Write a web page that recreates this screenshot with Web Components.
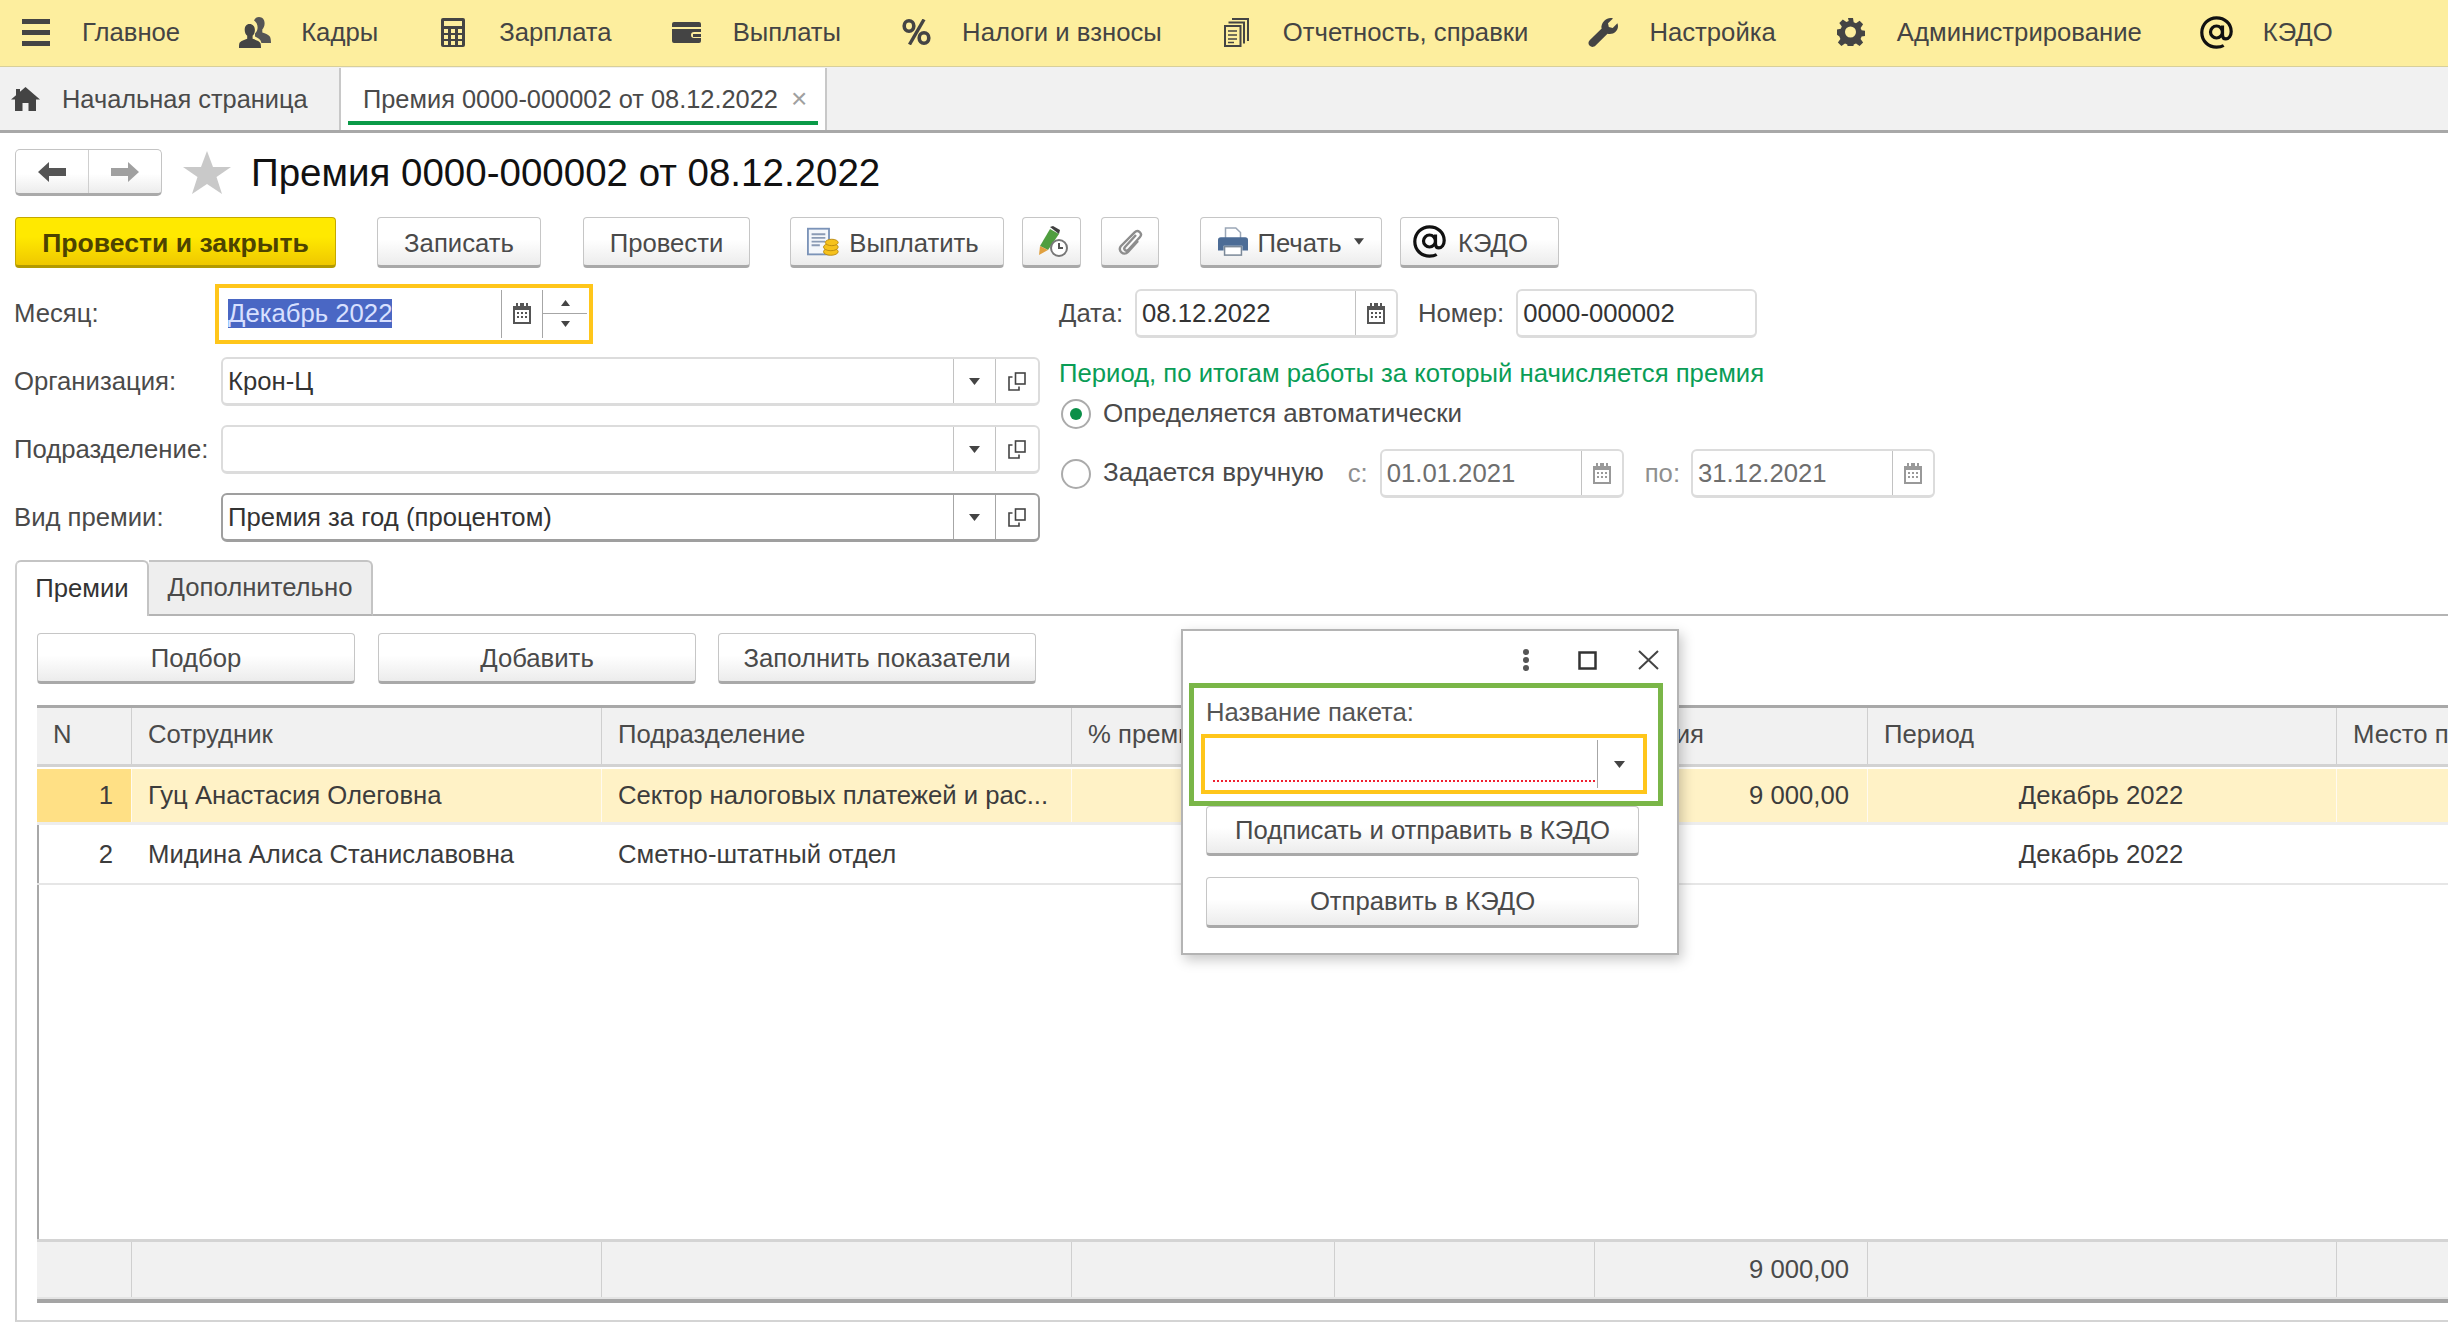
<!DOCTYPE html>
<html lang="ru">
<head>
<meta charset="utf-8">
<title>Премия</title>
<style>
  html, body { margin: 0; height: 1322px; overflow: hidden; background: #fff; }
  body { font: 25.7px "Liberation Sans", Arial, sans-serif; color: #3c3c3c; position: relative; }
  .sel { background: #4a67c4; color: #d8e0ff; }
  .dim { color: #8f8f8f; }
</style>
</head>
<body>
  <main-menu>
    <menu-item icon="menu" style="margin-left:21px">Главное</menu-item>
    <menu-item icon="people">Кадры</menu-item>
    <menu-item icon="calc">Зарплата</menu-item>
    <menu-item icon="wallet">Выплаты</menu-item>
    <menu-item icon="percent">Налоги и взносы</menu-item>
    <menu-item icon="docs">Отчетность, справки</menu-item>
    <menu-item icon="wrench">Настройка</menu-item>
    <menu-item icon="gear">Администрирование</menu-item>
    <menu-item icon="at">КЭДО</menu-item>
  </main-menu>

  <tab-bar>
    <open-tab home>Начальная страница</open-tab>
    <open-tab active>Премия 0000-000002 от 08.12.2022</open-tab>
  </tab-bar>

  <doc-form>
    <doc-title>Премия 0000-000002 от 08.12.2022</doc-title>

    <tool-bar style="--btn-pt:3px">
      <ui-button kind="primary" style="width:321px">Провести и закрыть</ui-button>
      <ui-button style="width:164px;margin-left:41px">Записать</ui-button>
      <ui-button style="width:167px;margin-left:42px">Провести</ui-button>
      <ui-button icon="pay" style="width:214px;margin-left:40px;padding-right:8px">Выплатить</ui-button>
      <ui-button icon="sign" style="width:59px;margin-left:18px"></ui-button>
      <ui-button icon="clip" style="width:58px;margin-left:20px"></ui-button>
      <ui-button icon="print" caret style="width:182px;margin-left:41px">Печать</ui-button>
      <ui-button icon="at" style="width:159px;margin-left:18px;padding-right:18px;gap:12px">КЭДО</ui-button>
    </tool-bar>

    <form-area>
      <form-row slot="left" label="Месяц:">
        <ui-field focus buttons="cal spin" style="width:366px"><span class="sel">Декабрь 2022</span></ui-field>
      </form-row>
      <form-row slot="left" label="Организация:">
        <ui-field buttons="select open" style="width:819px">Крон-Ц</ui-field>
      </form-row>
      <form-row slot="left" label="Подразделение:">
        <ui-field buttons="select open" style="width:819px"></ui-field>
      </form-row>
      <form-row slot="left" label="Вид премии:">
        <ui-field strong buttons="select open" style="width:819px">Премия за год (процентом)</ui-field>
      </form-row>

      <period-box slot="right">
        <span slot="date">Дата:</span>
        <ui-field slot="date" buttons="cal" style="width:263px;margin:0 20px 0 12px">08.12.2022</ui-field>
        <span slot="date">Номер:</span>
        <ui-field slot="date" style="width:241px;margin-left:12px">0000-000002</ui-field>

        <span slot="head">Период, по итогам работы за который начисляется премия</span>

        <radio-option slot="auto" checked>Определяется автоматически</radio-option>

        <radio-option slot="manual">Задается вручную</radio-option>
        <span slot="manual" class="dim" style="margin-left:24px">с:</span>
        <ui-field slot="manual" muted buttons="cal" style="width:244px;margin:0 21px 0 12px">01.01.2021</ui-field>
        <span slot="manual" class="dim">по:</span>
        <ui-field slot="manual" muted buttons="cal" style="width:244px;margin-left:11px">31.12.2021</ui-field>
      </period-box>
    </form-area>

    <tab-panel>
      <panel-tab slot="tabs" active>Премии</panel-tab>
      <panel-tab slot="tabs">Дополнительно</panel-tab>

      <tool-bar slot="body" style="margin-top:17px;--btn-pt:2px">
        <ui-button style="width:318px">Подбор</ui-button>
        <ui-button style="width:318px;margin-left:23px">Добавить</ui-button>
        <ui-button style="width:318px;margin-left:22px">Заполнить показатели</ui-button>
      </tool-bar>

      <bonus-table slot="body"></bonus-table>
    </tab-panel>
  </doc-form>

  <kedo-dialog>
    <span slot="label">Название пакета:</span>
    <ui-field slot="field" focus required buttons="select" style="width:434px;--sel-w:44px"></ui-field>
    <ui-button slot="actions" style="width:433px;height:50px">Подписать и отправить в КЭДО</ui-button>
    <ui-button slot="actions" style="width:433px;height:51px;margin-top:21px">Отправить в КЭДО</ui-button>
  </kedo-dialog>

<script>
const ICONS = {
  menu: '<svg width="28" height="27" viewBox="0 0 28 27"><path fill="#444" d="M0 0h28v5H0zM0 11h28v5H0zM0 22h28v5H0z"/></svg>',
  people: '<svg width="32" height="31" viewBox="0 0 32 31"><path fill="#555" d="M20 0c3.6 0 5.6 2.8 5.6 6.2 0 2.6-.9 4.9-2.3 6.2v3.1c3 1 6.7 2.4 7.7 4.2.7 1.2 1 4.2 1 6.3h-9.6c-.4-3-3.1-5-6.4-6.4v-3.2c1.6-1.3 2.4-3.1 2.6-5.6C18.800 7.200 17 4.600 15 3.400 16 1.200 17.900 0 20 0z"/><path fill="#444" d="M10.500 7c3.300 0 5.400 2.600 5.400 5.900 0 2.500-.9 4.700-2.300 5.900v2.900c3.400 1.100 7.300 2.800 7.900 4.500.4 1 .5 3 .5 4.800H0c0-1.800 0-3.800.4-4.800.7-1.700 4.500-3.400 7.800-4.500v-2.900c-1.400-1.200-2.500-3.400-2.500-5.900C5.700 9.600 7.300 7 10.500 7z"/></svg>',
  calc: '<svg width="24" height="29" viewBox="0 0 24 29"><rect width="24" height="29" rx="2" fill="#444"/><rect x="3" y="3" width="18" height="5" fill="#fdee9e"/><path fill="#fdee9e" d="M3 11h4v4H3zM10 11h4v4h-4zM17 11h4v4h-4zM3 17h4v4H3zM10 17h4v4h-4zM17 17h4v4h-4zM3 23h4v4H3zM10 23h4v4h-4zM17 23h4v4h-4z"/></svg>',
  wallet: '<svg width="29" height="21" viewBox="0 0 29 21"><path fill="#444" d="M2 0h25a2 2 0 0 1 2 2v3H0V2a2 2 0 0 1 2-2zM0 7h29v3h-7a3 3 0 0 0 0 6h7v3a2 2 0 0 1-2 2H2a2 2 0 0 1-2-2z"/><rect x="21" y="12" width="8" height="3" fill="#444"/></svg>',
  percent: '<svg width="29" height="26" viewBox="0 0 29 26"><g fill="none" stroke="#444" stroke-width="3.600"><ellipse cx="7" cy="7" rx="4.800" ry="5.200"/><ellipse cx="22" cy="19" rx="4.800" ry="5.200"/></g><path stroke="#444" stroke-width="3.400" d="M22 .5 7.500 25.500"/></svg>',
  docs: '<svg width="25" height="29" viewBox="0 0 25 29" fill="none" stroke="#444" stroke-width="2"><path d="M8 1h16v22"/><path d="M4.500 4.500h15.500v21"/><rect x="1" y="8" width="15.500" height="20" fill="#fdee9e"/><path d="M4 13h9M4 17h9M4 21h9M4 24.500h6" stroke-width="1.600"/></svg>',
  wrench: '<svg width="30" height="29" viewBox="0 0 30 29"><path fill="#444" d="M22.500 0c1 0 1.700.1 2.500.4l-5 4.800.8 3.900 3.900 1 4.700-4.900c.4 1 .6 1.900.6 2.900 0 4.500-3.700 8-8.200 8-.8 0-1.600-.1-2.300-.3L7.600 27.500c-1.900 1.900-4.300 1.900-5.900.3-1.700-1.700-1.700-4 .2-5.900l11.800-11.300c-.2-.7-.3-1.400-.3-2.200C14.400 3.700 18 0 22.500 0z"/></svg>',
  gear: '<svg width="28" height="28" viewBox="0 0 28 28"><path fill="#444" fill-rule="evenodd" d="M11.500 0h5l.7 4.300 2.300 1 3.600-2.500 3.500 3.500-2.500 3.600 1 2.300 4.300.7v5l-4.300.7-1 2.300 2.500 3.600-3.500 3.500-3.600-2.500-2.300 1-.7 4.300h-5l-.7-4.300-2.300-1-3.600 2.500-3.500-3.500 2.500-3.600-1-2.300L0 16.500v-5l4.300-.7 1-2.300L2.800 5l3.500-3.500 3.600 2.500 2.300-1zM14 8.500a5.500 5.500 0 1 0 0 11 5.500 5.500 0 0 0 0-11z" transform="translate(-.5 0)"/></svg>',
  at: '<svg width="33" height="33" viewBox="0 0 33 33" fill="none" stroke="#111" stroke-width="3.200"><circle cx="16.500" cy="16" r="6"/><path d="M22.500 9.500V19c0 2.400 1.400 3.900 3.400 3.900 2.800 0 5.300-3 5.300-7.400C31.200 7.700 24.800 1.800 16.500 1.800 8.200 1.800 1.800 8.300 1.800 16.500c0 8.400 6.500 14.700 14.700 14.700 2.800 0 5.200-.5 7.200-1.700"/></svg>',
  home: '<svg width="29" height="24" viewBox="0 0 29 24"><path fill="#444" d="M14.500 0 29 12.500h-4V24h-7.500v-8h-6v8H4V12.500H0L5 8.200V2h4v2.800z"/></svg>',
  pay: '<svg width="33" height="30" viewBox="0 0 36 31"><rect x="1" y="1" width="23" height="28" fill="#f4f7fb" stroke="#7b93b8" stroke-width="2"/><path stroke="#8a9bb5" stroke-width="2" d="M5 7h15M5 11h15M5 15h15M5 19h9"/><g fill="#f6c21c" stroke="#b98a10" stroke-width="1"><ellipse cx="26" cy="26" rx="8" ry="4"/><ellipse cx="26" cy="21" rx="8" ry="4"/><ellipse cx="27" cy="16" rx="7" ry="3.500"/></g></svg>',
  sign: '<svg width="34" height="31" viewBox="0 0 34 31"><path fill="#4f9e3f" d="M15 3 24 8 13 24 5 20z"/><path fill="#3f3f3f" d="M15 1l3-1 7 4-1 4z"/><path fill="#e0a040" d="M5 20l8 4-9 5z"/><circle cx="24" cy="22" r="8" fill="#fff" stroke="#777" stroke-width="2"/><path d="M24 17v5h4" fill="none" stroke="#555" stroke-width="2"/></svg>',
  clip: '<svg width="26" height="27" viewBox="0 0 26 27" fill="none" stroke="#8d8d8d" stroke-width="2.400"><path d="M19 7 8 19c-2 2.200 1 5 3.200 3L23 9c3-3.400-2-8-5.400-4.700L4 18c-4 4.500 2.800 10.500 7 6l10-11"/></svg>',
  print: '<svg width="30" height="31" viewBox="0 0 32 31"><path fill="#fff" stroke="#9aa6b6" stroke-width="1.600" d="M8 1h11l5 5v9H8z"/><path fill="#4c6c96" d="M3 11h26a3 3 0 0 1 3 3v11h-6v-5H6v5H0V14a3 3 0 0 1 3-3z"/><rect x="7" y="21" width="18" height="9" fill="#fff" stroke="#7a8898" stroke-width="1.600"/></svg>'
};

function calendarIcon(color) {
  return `<svg width="18" height="21" viewBox="0 0 18 21"><path fill="${color}" d="M3 0h2v3h2V0h4v3h2V0h2v3h3v18H0V3h3z"/><rect x="2" y="7" width="14" height="12" fill="#fff"/><path fill="${color}" d="M4 9h2v2H4zM8 9h2v2H8zM12 9h2v2h-2zM4 13h2v2H4zM8 13h2v2H8zM12 13h2v2h-2z"/></svg>`;
}
const CARET = '<svg width="11" height="7" viewBox="0 0 11 7"><path fill="#444" d="M0 0h11L5.500 7z"/></svg>';
const OPEN_ICON = '<svg width="18" height="19" viewBox="0 0 18 19" fill="none" stroke="#444" stroke-width="1.600"><rect x="7.500" y="1" width="9.500" height="11" fill="#fff"/><path d="M4.500 5H1v13h10v-3.500"/></svg>';

class MainMenu extends HTMLElement {
  constructor() {
    super();
    this.attachShadow({ mode: 'open' }).innerHTML = `
      <style>
        :host { display: flex; align-items: center; height: 66px; gap: 60px; background: #fdee9e;
                border-bottom: 1px solid #d8cf9a; color: #444; }
      </style>
      <slot></slot>`;
  }
}

class MenuItem extends HTMLElement {
  constructor() {
    super();
    this.attachShadow({ mode: 'open' }).innerHTML = `
      <style>
        :host { display: flex; align-items: center; gap: 31px; white-space: nowrap; }
        i { display: flex; justify-content: center; width: 30px; margin-top: -2px; }
        svg { flex: none; }
        span { margin-top: -1px; }
      </style>
      <i>${ICONS[this.getAttribute('icon')] || ''}</i><span><slot></slot></span>`;
  }
}

class TabBar extends HTMLElement {
  constructor() {
    super();
    this.attachShadow({ mode: 'open' }).innerHTML = `
      <style>
        :host { display: flex; height: 62px; background: #f1f1f1; border-top: 1px solid #f1f1f1;
                border-bottom: 3px solid #a8a8a8; color: #4a4a4a; font-size: 25.4px; }
      </style>
      <slot></slot>`;
  }
}

class OpenTab extends HTMLElement {
  constructor() {
    super();
    const home = this.hasAttribute('home');
    const active = this.hasAttribute('active');
    this.attachShadow({ mode: 'open' }).innerHTML = `
      <style>
        :host { display: flex; align-items: center; box-sizing: border-box; white-space: nowrap;
                position: relative; height: 62px; }
        :host([home]) { width: 341px; padding-left: 11px; border-right: 2px solid #c8c8c8; }
        :host([active]) { width: 486px; padding-left: 22px; background: #fff; border-right: 2px solid #c8c8c8; }
        .ico { margin-right: 22px; display: flex; }
        .x { margin-left: 13px; color: #a0a0a0; font-size: 28px; }
        .line { position: absolute; left: 7px; right: 7px; bottom: 5px; height: 4px; background: #0a9a48; }
      </style>
      ${home ? `<span class="ico">${ICONS.home}</span>` : ''}
      <slot></slot>
      ${active ? '<span class="x">×</span><span class="line"></span>' : ''}`;
  }
}

class DocForm extends HTMLElement {
  constructor() {
    super();
    this.attachShadow({ mode: 'open' }).innerHTML = `
      <style>
        :host { display: flex; flex-direction: column; padding-left: 15px; overflow: hidden; }
      </style>
      <slot></slot>`;
  }
}

class DocTitle extends HTMLElement {
  constructor() {
    super();
    this.attachShadow({ mode: 'open' }).innerHTML = `
      <style>
        :host { display: flex; align-items: center; height: 47px; margin-top: 16px; }
        .nav { display: flex; width: 147px; height: 47px; box-sizing: border-box; background: linear-gradient(#fff 55%, #ececec);
               border: 1px solid #c4c4c4; border-bottom: 3px solid #aaa; border-radius: 5px; }
        .nav div { flex: 1; display: flex; align-items: center; justify-content: center; }
        .nav div + div { border-left: 1px solid #cfcfcf; }
        .star { margin: 0 20px 0 21px; display: flex; }
        h1 { margin: 0; font-size: 38.5px; font-weight: 400; color: #111; white-space: nowrap; }
      </style>
      <div class="nav">
        <div><svg width="28" height="20" viewBox="0 0 28 20"><path fill="#555" d="M11 0v6h17v8H11v6L0 10z"/></svg></div>
        <div><svg width="28" height="20" viewBox="0 0 28 20"><path fill="#a0a0a0" d="M17 0v6H0v8h17v6l11-10z"/></svg></div>
      </div>
      <span class="star"><svg width="48" height="43" viewBox="0 0 48 43"><path fill="#c9c9c9" d="M24 0l6 16h18L33.500 26 39 43 24 33 9 43l5.500-17L0 16h18z"/></svg></span>
      <h1><slot></slot></h1>`;
  }
}

class ToolBar extends HTMLElement {
  constructor() {
    super();
    this.attachShadow({ mode: 'open' }).innerHTML = `
      <style>
        :host { display: flex; height: 51px; margin-top: 21px; }
      </style>
      <slot></slot>`;
  }
}

class UiButton extends HTMLElement {
  constructor() {
    super();
    const icon = this.getAttribute('icon');
    this.attachShadow({ mode: 'open' }).innerHTML = `
      <style>
        :host { display: flex; align-items: center; justify-content: center; gap: 9px; box-sizing: border-box;
                height: 100%; flex: none; white-space: nowrap; color: #4a4a4a; padding-top: var(--btn-pt, 0);
                background: linear-gradient(#fff 45%, #ececec); border: 1px solid #c6c6c6;
                border-bottom: 3px solid #a9a9a9; border-radius: 4px; }
        :host([kind="primary"]) { font-weight: 700; font-size: 26.6px; color: #4d4300; border: 1px solid #c4a800; border-bottom: 3px solid #b39a00;
                background: linear-gradient(#ffe900 40%, #efc800); }
        i { display: flex; margin-top: calc(var(--btn-pt, 0px) * -1); }
        svg { flex: none; }
      </style>
      ${icon ? `<i>${ICONS[icon]}</i>` : ''}<slot></slot>
      ${this.hasAttribute('caret') ? `<i style="margin-left:3px">${CARET.replace('width="11"', 'width="10"')}</i>` : ''}`;
  }
}

class UiField extends HTMLElement {
  constructor() {
    super();
    const muted = this.hasAttribute('muted');
    const buttons = (this.getAttribute('buttons') || '').split(' ').filter(Boolean).map(name => {
      if (name === 'cal') return `<b style="width:41px">${calendarIcon(muted ? '#999' : '#555')}</b>`;
      if (name === 'select') return `<b style="width:var(--sel-w, 42px)">${CARET}</b>`;
      if (name === 'open') return `<b style="width:43px">${OPEN_ICON}</b>`;
      if (name === 'spin') return `<b class="spin" style="width:45px">
        <svg width="9" height="6" viewBox="0 0 9 6"><path fill="#444" d="M4.500 0 9 6H0z"/></svg>
        <hr>
        <svg width="9" height="6" viewBox="0 0 9 6"><path fill="#444" d="M0 0h9L4.500 6z"/></svg></b>`;
      return '';
    }).join('');
    this.attachShadow({ mode: 'open' }).innerHTML = `
      <style>
        :host { display: flex; box-sizing: border-box; height: 49px; flex: none; position: relative; background: #fff;
                border: 2px solid #dcdcdc; border-bottom-width: 3px; border-radius: 6px; color: #333; }
        :host([strong]) { border-color: #9f9f9f; }
        :host([muted]) { color: #6e6e6e; }
        :host([focus]) { border: 0; border-radius: 0; height: 48px; outline: 4px solid #ffc61a; outline-offset: 2px; }
        .v { flex: 1; display: flex; align-items: center; padding-left: 5px; white-space: nowrap; overflow: hidden; }
        :host([focus]) .v { padding-left: 7px; }
        b { flex: none; display: flex; align-items: center; justify-content: center; box-sizing: border-box;
            border-left: 1px solid #a6a6a6; }
        :host(:not([strong]):not([focus])) b { border-left-color: #c2c2c2; }
        .spin { flex-direction: column; gap: 7px; }
        hr { width: 100%; margin: 0; border: 0; border-top: 1px solid #a6a6a6; }
        .req { position: absolute; left: 6px; bottom: 6px; border-top: 2px dotted #f02030; }
      </style>
      <div class="v"><slot></slot></div>${buttons}
      ${this.hasAttribute('required') ? '<span class="req" style="right:46px"></span>' : ''}`;
  }
}

class FormArea extends HTMLElement {
  constructor() {
    super();
    this.attachShadow({ mode: 'open' }).innerHTML = `
      <style>
        :host { display: flex; margin-top: 21px; }
        .l { display: flex; flex-direction: column; gap: 19px; width: 1044px; flex: none; }
      </style>
      <div class="l"><slot name="left"></slot></div><slot name="right"></slot>`;
  }
}

class FormRow extends HTMLElement {
  constructor() {
    super();
    this.attachShadow({ mode: 'open' }).innerHTML = `
      <style>
        :host { display: flex; align-items: center; height: 49px; }
        label { width: 206px; flex: none; color: #4a4a4a; white-space: nowrap; margin-left: -1px; padding-right: 1px; }
      </style>
      <label>${this.getAttribute('label')}</label><slot></slot>`;
  }
}

class PeriodBox extends HTMLElement {
  constructor() {
    super();
    this.attachShadow({ mode: 'open' }).innerHTML = `
      <style>
        :host { display: block; color: #4a4a4a; white-space: nowrap; }
        .row { display: flex; align-items: center; }
        .date { height: 49px; }
        .head { height: 30px; margin-top: 20px; color: #0a9d56; }
        .auto { height: 30px; margin-top: 11px; }
        .manual { height: 49px; margin-top: 20px; }
      </style>
      <div class="row date"><slot name="date"></slot></div>
      <div class="row head"><slot name="head"></slot></div>
      <div class="row auto"><slot name="auto"></slot></div>
      <div class="row manual"><slot name="manual"></slot></div>`;
  }
}

class RadioOption extends HTMLElement {
  constructor() {
    super();
    this.attachShadow({ mode: 'open' }).innerHTML = `
      <style>
        :host { display: flex; align-items: center; gap: 12px; margin-left: 2px; font-size: 26px; }
        i { display: flex; align-items: center; justify-content: center; box-sizing: border-box; width: 30px; height: 30px;
            border: 2px solid #ababab; border-radius: 50%; }
        u { width: 12px; height: 12px; border-radius: 50%; background: #0a8f48; }
        span { margin-top: -2px; }
      </style>
      <i>${this.hasAttribute('checked') ? '<u></u>' : ''}</i><span><slot></slot></span>`;
  }
}

class TabPanel extends HTMLElement {
  constructor() {
    super();
    this.attachShadow({ mode: 'open' }).innerHTML = `
      <style>
        :host { display: block; margin-top: 18px; }
        .tabs { display: flex; height: 56px; }
        .tabs::after { content: ""; flex: 1; border-bottom: 2px solid #b4b4b4; }
        .body { height: 706px; box-sizing: border-box; padding-left: 20px; overflow: hidden;
                border-left: 2px solid #cfcfcf; border-bottom: 2px solid #d4d4d4; }
      </style>
      <div class="tabs"><slot name="tabs"></slot></div>
      <div class="body"><slot name="body"></slot></div>`;
  }
}

class PanelTab extends HTMLElement {
  constructor() {
    super();
    this.attachShadow({ mode: 'open' }).innerHTML = `
      <style>
        :host { display: flex; align-items: center; justify-content: center; box-sizing: border-box; width: 224px;
                background: #eee; border: 2px solid #c4c4c4; border-left: 0; border-bottom: 2px solid #b4b4b4;
                border-radius: 0 6px 0 0; color: #4a4a4a; padding-bottom: 2px; }
        :host([active]) { width: 134px; background: #fff; border-left: 2px solid #cfcfcf; border-bottom: 0;
                border-radius: 6px 6px 0 0; color: #333; }
      </style>
      <slot></slot>`;
  }
}

const COLS = [94, 470, 470, 263, 260, 273, 469, 200];
const ROWS = [
  { kind: 'head', cells: ['N', 'Сотрудник', 'Подразделение', '% премии', '', 'Премия', 'Период', 'Место п'] },
  { kind: 'sel', cells: ['1', 'Гуц Анастасия Олеговна', 'Сектор налоговых платежей и рас...', '', '', '9 000,00', 'Декабрь 2022', ''] },
  { kind: 'row', cells: ['2', 'Мидина Алиса Станиславовна', 'Сметно-штатный отдел', '', '', '', 'Декабрь 2022', ''] }
];
const ALIGN = ['right', 'left', 'left', 'left', 'left', 'right', 'center', 'left'];

class BonusTable extends HTMLElement {
  constructor() {
    super();
    const tpl = COLS.map(w => w + 'px').join(' ');
    const row = r => `<div class="tr ${r.kind}">` + r.cells.map((c, i) =>
      `<div class="td ${r.kind === 'head' ? 'left' : ALIGN[i]}">${c}</div>`).join('') + '</div>';
    const foot = COLS.map((w, i) => `<div class="td right">${i === 5 ? '9 000,00' : ''}</div>`).join('');
    this.attachShadow({ mode: 'open' }).innerHTML = `
      <style>
        :host { display: flex; flex-direction: column; width: 2519px; height: 598px; margin-top: 21px; box-sizing: border-box;
                border-left: 2px solid #a8a8a8; border-top: 3px solid #a8a8a8; border-bottom: 4px solid #a4a4a4; color: #3c3c3c; }
        .tr { display: grid; grid-template-columns: ${tpl}; margin-left: -2px; box-sizing: border-box; flex: none; }
        .td { display: flex; align-items: center; padding: 0 18px 0 16px; box-sizing: border-box; white-space: nowrap; overflow: hidden; min-width: 0; }
        .left { justify-content: flex-start; }
        .right { justify-content: flex-end; }
        .center { justify-content: center; }
        .head { height: 59px; background: #f1f1f1; border-bottom: 3px solid #d2d2d2; color: #4a4a4a; }
        .head .td { padding-bottom: 4px; }
        .head .td + .td, .foot .td + .td, .row .td + .td { border-left: 1px solid transparent; }
        .head .td + .td, .foot .td + .td { border-left-color: #cfcfcf; }
        .sel { height: 58px; background: #fff2c6; border-top: 2px solid #fff; border-bottom: 3px solid #ededed; }
        .sel .td + .td { border-left: 1px solid #fffaf0; }
        .sel .td:first-child { background: #ffe085; }
        .row { height: 60px; border-bottom: 2px solid #e6e6e6; }
        .grow { flex: 1; }
        .foot { height: 60px; background: #f1f1f1; border-top: 3px solid #d4d4d4; border-bottom: 2px solid #e4e4e4; color: #4a4a4a; }
      </style>
      ${ROWS.map(row).join('')}
      <div class="grow"></div>
      <div class="tr foot">${foot}</div>`;
  }
}

class KedoDialog extends HTMLElement {
  constructor() {
    super();
    this.attachShadow({ mode: 'open' }).innerHTML = `
      <style>
        :host { position: absolute; left: 1181px; top: 629px; width: 498px; height: 326px; box-sizing: border-box;
                background: #fff; border: 2px solid #b4b4b4; box-shadow: 3px 5px 12px rgba(0,0,0,.22); color: #4a4a4a; }
        .top { display: flex; align-items: center; justify-content: flex-end; height: 52px; padding: 6px 18px 0 0; box-sizing: border-box; }
        .top svg { display: block; }
        .frame { margin-left: 6px; width: 474px; height: 123px; box-sizing: border-box; border: 5px solid #7ab648;
                 padding: 9px 0 0 12px; }
        .label { height: 30px; line-height: 30px; color: #555; white-space: nowrap; }
        .fld { margin: 13px 0 0 1px; }
        .act { margin-left: 23px; display: flex; flex-direction: column; }
      </style>
      <div class="top">
        <svg width="8" height="24" viewBox="0 0 8 24" style="margin-right:48px"><g fill="#555"><circle cx="4" cy="4" r="3"/><circle cx="4" cy="12" r="3"/><circle cx="4" cy="20" r="3"/></g></svg>
        <svg width="19" height="19" viewBox="0 0 19 19" style="margin-right:41px"><rect x="1.500" y="1.500" width="16" height="16" fill="none" stroke="#333" stroke-width="2.500"/></svg>
        <svg width="21" height="20" viewBox="0 0 21 20"><path d="M1 1l19 18M20 1 1 19" stroke="#444" stroke-width="2"/></svg>
      </div>
      <div class="frame">
        <div class="label"><slot name="label"></slot></div>
        <div class="fld"><slot name="field"></slot></div>
      </div>
      <div class="act"><slot name="actions"></slot></div>`;
  }
}

customElements.define('main-menu', MainMenu);
customElements.define('menu-item', MenuItem);
customElements.define('tab-bar', TabBar);
customElements.define('open-tab', OpenTab);
customElements.define('doc-form', DocForm);
customElements.define('doc-title', DocTitle);
customElements.define('tool-bar', ToolBar);
customElements.define('ui-button', UiButton);
customElements.define('ui-field', UiField);
customElements.define('form-area', FormArea);
customElements.define('form-row', FormRow);
customElements.define('period-box', PeriodBox);
customElements.define('radio-option', RadioOption);
customElements.define('tab-panel', TabPanel);
customElements.define('panel-tab', PanelTab);
customElements.define('bonus-table', BonusTable);
customElements.define('kedo-dialog', KedoDialog);
</script>
</body>
</html>
